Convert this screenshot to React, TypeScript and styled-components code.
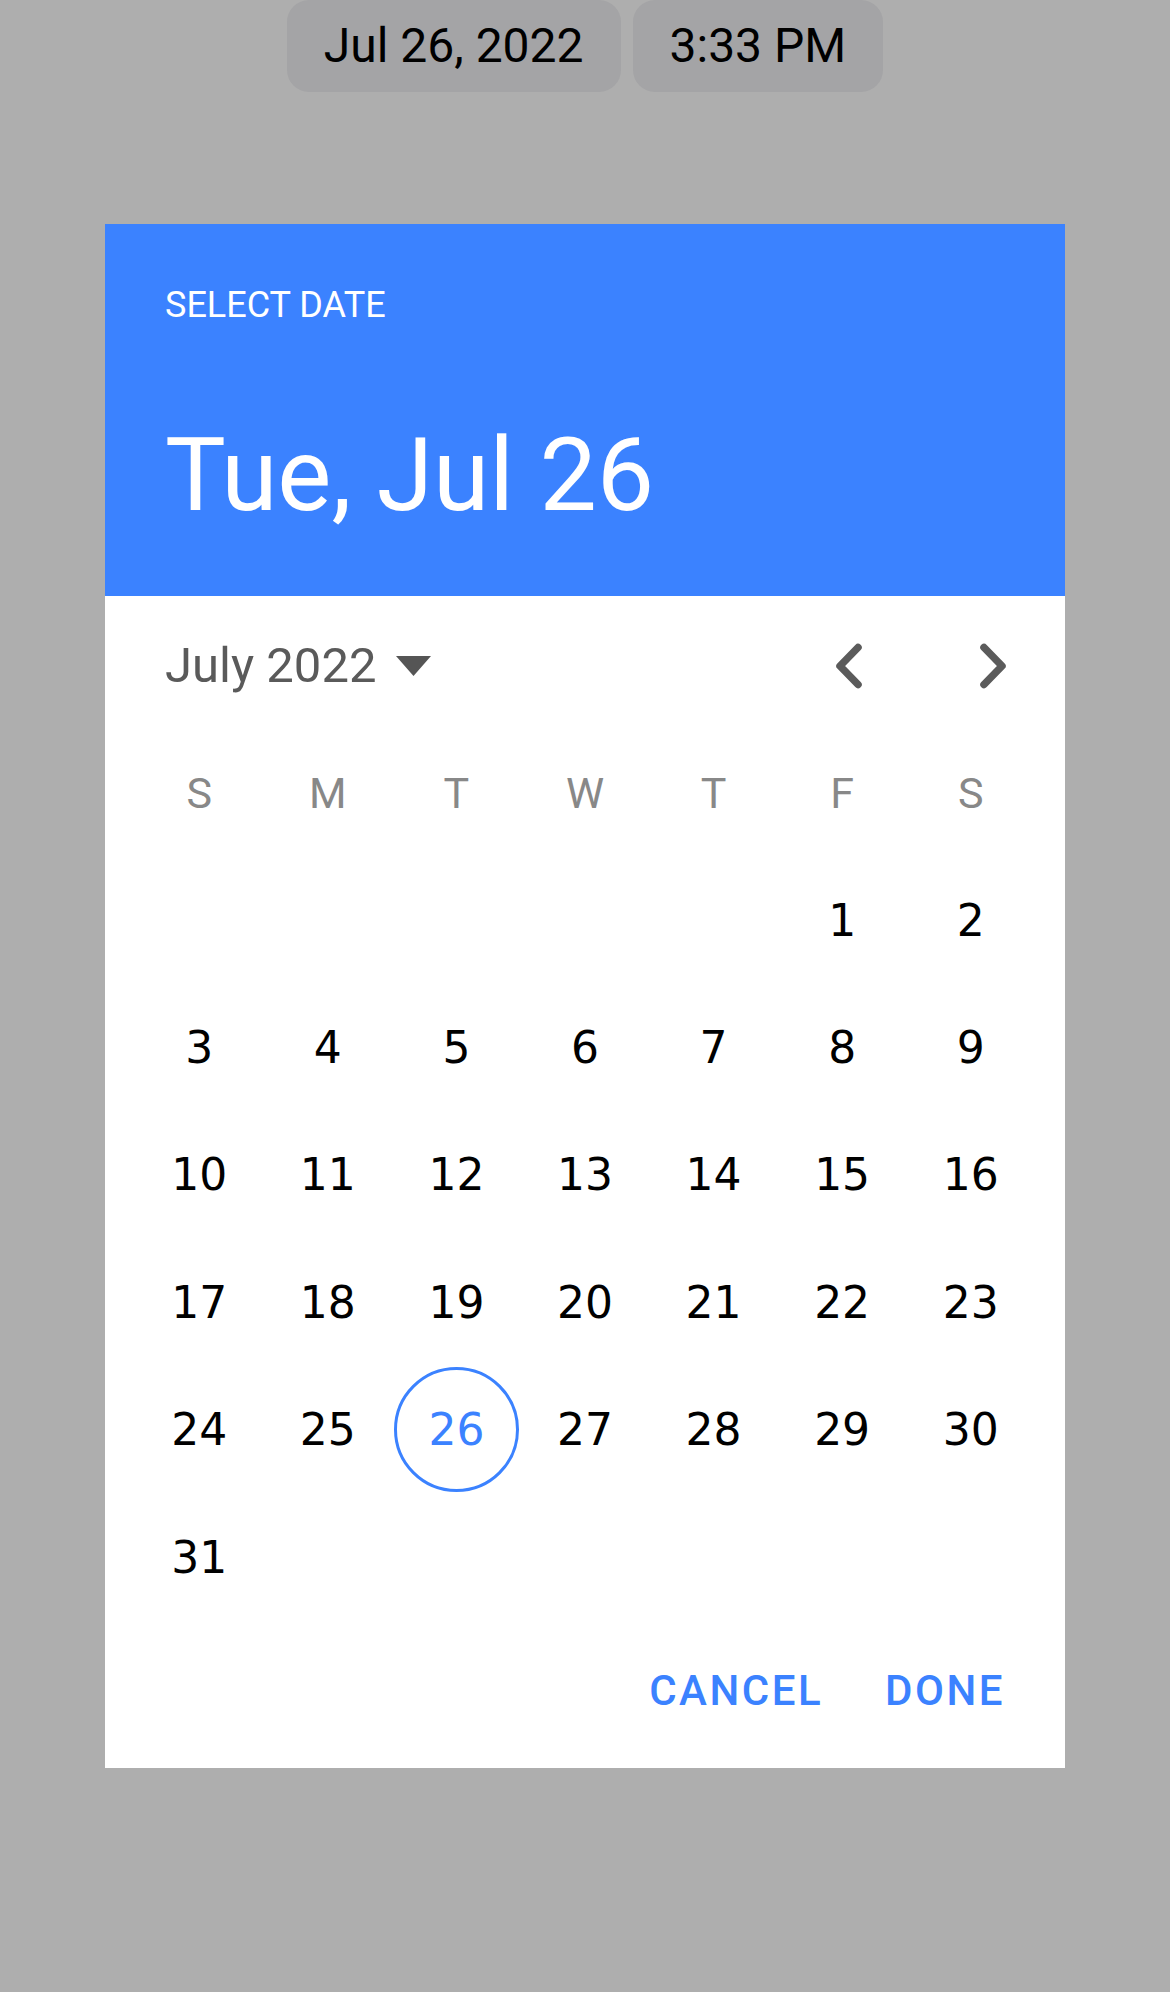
import styled, { createGlobalStyle } from 'styled-components';

const GlobalStyle = createGlobalStyle`
  html, body {
    margin: 0;
    padding: 0;
    background: #aeaeae;
  }
  body {
    font-family: Roboto, "Liberation Sans", sans-serif;
  }
`;

const Screen = styled.div`
  width: 1170px;
  min-height: 1992px;
  display: flex;
  flex-direction: column;
  align-items: center;
  background: #aeaeae;
`;

const PillRow = styled.div`
  display: flex;
  gap: 12px;
`;

const Pill = styled.div`
  height: 92px;
  padding: 0 37px;
  display: flex;
  align-items: center;
  background: #a4a4a6;
  border-radius: 22px;
  font-size: 48px;
  line-height: 56px;
  color: #000;
`;

const Dialog = styled.div`
  margin-top: 132px;
  width: 960px;
  background: #fff;
  display: flex;
  flex-direction: column;
`;

const Header = styled.div`
  background: #3b82ff;
  color: #fff;
  padding: 60.5px 60px 61px;
`;

const HeaderLabel = styled.div`
  font-size: 36px;
  line-height: 40px;
  height: 40px;
`;

const HeaderTitle = styled.div`
  margin-top: 90.5px;
  font-size: 102px;
  line-height: 120px;
  height: 120px;
`;

const MonthRow = styled.div`
  height: 126px;
  padding: 7px 24px 0 60px;
  display: flex;
  align-items: center;
  justify-content: space-between;
`;

const MonthLabel = styled.div`
  display: flex;
  align-items: center;
  gap: 20px;
  font-size: 49px;
  line-height: 56px;
  color: #5a5a5a;
`;

const NavGroup = styled.div`
  display: flex;
  gap: 48px;
`;

const NavButton = styled.button`
  width: 96px;
  height: 96px;
  padding: 0;
  border: none;
  background: transparent;
  display: flex;
  align-items: center;
  justify-content: center;
  cursor: pointer;
`;

const Grid = styled.div`
  margin: 0 30px;
  display: grid;
  grid-template-columns: repeat(7, 1fr);
  grid-auto-rows: 127.4px;
`;

const WeekDay = styled.div`
  display: flex;
  align-items: center;
  justify-content: center;
  font-size: 43px;
  color: #888;
`;

const DayCell = styled.div`
  display: flex;
  align-items: center;
  justify-content: center;
`;

const Day = styled.div<{ $selected?: boolean }>`
  width: 125px;
  height: 125px;
  box-sizing: border-box;
  border-radius: 50%;
  display: flex;
  align-items: center;
  justify-content: center;
  font-family: "DejaVu Sans", sans-serif;
  font-size: 44px;
  color: ${p => (p.$selected ? '#3b82ff' : '#000')};
  border: ${p => (p.$selected ? '3px solid #3b82ff' : 'none')};
`;

const Actions = styled.div`
  height: 147px;
  padding: 0 60px 6px 0;
  box-sizing: border-box;
  display: flex;
  align-items: center;
  justify-content: flex-end;
  gap: 62px;
`;

const ActionButton = styled.button`
  padding: 0;
  border: none;
  background: transparent;
  font-family: Roboto, "Liberation Sans", sans-serif;
  font-weight: 500;
  font-size: 42px;
  line-height: 50px;
  letter-spacing: 2.5px;
  color: #3b82ff;
  cursor: pointer;
`;

const Chevron = ({ dir }: { dir: 'left' | 'right' }) => (
  <svg width="40" height="56" viewBox="0 0 40 56">
    <polyline
      points={dir === 'left' ? '29,9.5 11,28 29,46.5' : '11,9.5 29,28 11,46.5'}
      fill="none"
      stroke="#5b5b5b"
      strokeWidth="7.5"
      strokeLinecap="round"
      strokeLinejoin="round"
    />
  </svg>
);

const Caret = () => (
  <svg width="35" height="20" viewBox="0 0 35 20">
    <polygon points="0,0 35,0 17.5,20" fill="#555" />
  </svg>
);

const weekDays = ['S', 'M', 'T', 'W', 'T', 'F', 'S'];
const firstOffset = 5; // July 1, 2022 was a Friday
const days = Array.from({ length: 31 }, (_, i) => i + 1);

export default function App() {
  return (
    <>
      <GlobalStyle />
      <Screen>
        <PillRow>
          <Pill>Jul 26, 2022</Pill>
          <Pill>3:33 PM</Pill>
        </PillRow>

        <Dialog>
          <Header>
            <HeaderLabel>SELECT DATE</HeaderLabel>
            <HeaderTitle>Tue, Jul 26</HeaderTitle>
          </Header>

          <MonthRow>
            <MonthLabel>
              July 2022
              <Caret />
            </MonthLabel>
            <NavGroup>
              <NavButton aria-label="Previous month">
                <Chevron dir="left" />
              </NavButton>
              <NavButton aria-label="Next month">
                <Chevron dir="right" />
              </NavButton>
            </NavGroup>
          </MonthRow>

          <Grid>
            {weekDays.map((d, i) => (
              <WeekDay key={'w' + i}>{d}</WeekDay>
            ))}
            {Array.from({ length: firstOffset }, (_, i) => (
              <DayCell key={'e' + i} />
            ))}
            {days.map(d => (
              <DayCell key={d}>
                <Day $selected={d === 26}>{d}</Day>
              </DayCell>
            ))}
          </Grid>

          <Actions>
            <ActionButton>CANCEL</ActionButton>
            <ActionButton>DONE</ActionButton>
          </Actions>
        </Dialog>
      </Screen>
    </>
  );
}
